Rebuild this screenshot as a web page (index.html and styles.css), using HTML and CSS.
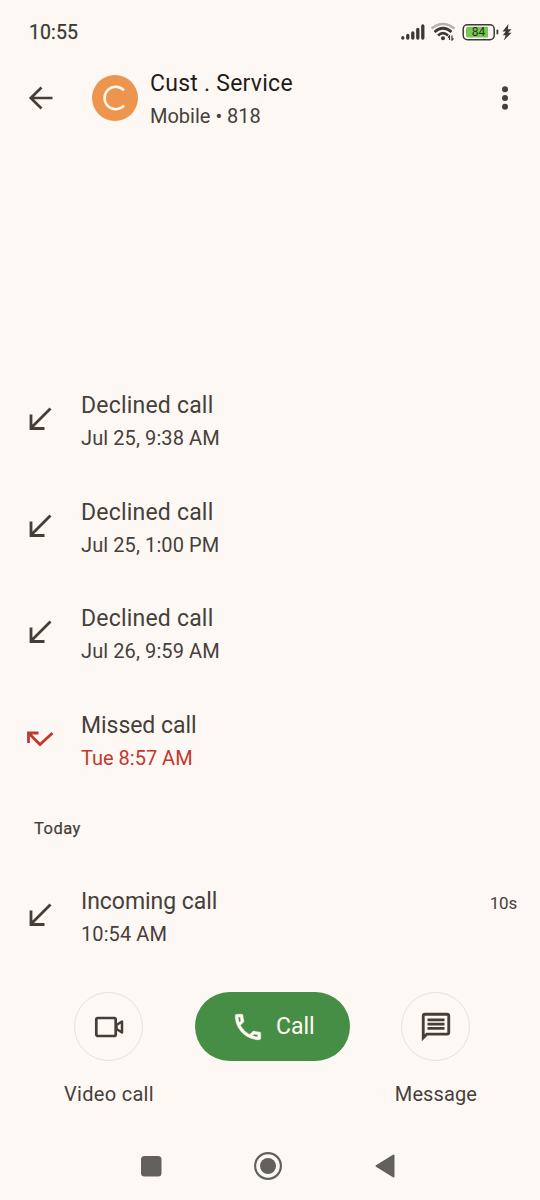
FILE: index.html
```html
<!DOCTYPE html>
<html lang="en">
<head>
<meta charset="utf-8">
<title>Call history</title>
<link rel="stylesheet" href="styles.css">
</head>
<body>
<div class="status">
  <span class="clock">10:55</span>
  <svg class="status-icons" width="112" height="20" viewBox="0 0 112 20">
    <g stroke="#3b3835" stroke-width="3.300" stroke-linecap="round">
      <path d="M2.800 17v-.3M7.800 17v-2.500M12.800 17v-5M17.800 17V8.500M22.800 17V5"/>
    </g>
    <g fill="none" stroke-width="2.700">
      <path d="M31.500 7.500Q43-1.500 54.500 7.500" stroke="#b5b1ad" stroke-width="2.300"/>
      <path d="M34.500 11Q43 3.500 51.500 11" stroke="#3b3835"/>
      <path d="M38 14.400Q43 10 48 14.400" stroke="#3b3835"/>
    </g>
    <circle cx="43" cy="17.300" r="2" fill="#3b3835"/>
    <path d="M49.500 19v-4l-1.500 1.500M52 14.500v4.500l1.500-1.500" fill="none" stroke="#3b3835" stroke-width="1.200"/>
    <rect x="63.200" y="3.700" width="31" height="15" rx="4.200" fill="none" stroke="#3b3835" stroke-width="1.500"/>
    <path d="M68 5.800h20v10.700H68a2 2 0 0 1-2-2V7.800a2 2 0 0 1 2-2z" fill="#79c657"/>
    <rect x="96.500" y="8.500" width="1.800" height="5" rx=".9" fill="#3b3835"/>
    <text class="battery-level" x="78.500" y="15.400" text-anchor="middle">84</text>
    <path d="M108.500 3L102.500 10.500h3.300L102.800 14.300h2.900L103.800 19.500l7.800-7.800h-3.400l3.300-3.500h-3.700z" fill="#3b3835"/>
  </svg>
</div>

<header class="topbar">
  <svg class="back" width="26" height="26" viewBox="0 0 26 26"><path d="M24.500 13H3M13.500 2.500L2.800 13 13.500 23.500" fill="none" stroke="#463d36" stroke-width="2.700"/></svg>
  <div class="avatar"><svg width="24" height="26" viewBox="0 0 22 24"><path d="M19.300 5.100A10.300 10.300 0 1 0 19.300 18.900" fill="none" stroke="#fff8ee" stroke-width="2.300"/></svg></div>
  <div class="contact">
    <div class="name">Cust . Service</div>
    <div class="number">Mobile • 818</div>
  </div>
  <svg class="more" width="8" height="26" viewBox="0 0 8 26" fill="#463f3a"><circle cx="4" cy="4.300" r="3"/><circle cx="4" cy="13" r="3"/><circle cx="4" cy="21.700" r="3"/></svg>
</header>

<main class="history">
  <div class="entry">
    <svg class="dir" viewBox="0 0 28 28"><path d="M23.500 3.500L4 23M4 9.500V23.500H17.500"/></svg>
    <div><div class="kind">Declined call</div><div class="time">Jul 25, 9:38 AM</div></div>
  </div>
  <div class="entry">
    <svg class="dir" viewBox="0 0 28 28"><path d="M23.500 3.500L4 23M4 9.500V23.500H17.500"/></svg>
    <div><div class="kind">Declined call</div><div class="time">Jul 25, 1:00 PM</div></div>
  </div>
  <div class="entry">
    <svg class="dir" viewBox="0 0 28 28"><path d="M23.500 3.500L4 23M4 9.500V23.500H17.500"/></svg>
    <div><div class="kind">Declined call</div><div class="time">Jul 26, 9:59 AM</div></div>
  </div>
  <div class="entry missed">
    <svg class="dir" viewBox="0 0 28 28"><path d="M11.500 8H1.500V18M1.500 8L13 19.500 25.500 8"/></svg>
    <div><div class="kind">Missed call</div><div class="time">Tue 8:57 AM</div></div>
  </div>
  <h2 class="day">Today</h2>
  <div class="entry incoming">
    <svg class="dir" viewBox="0 0 28 28"><path d="M23.500 3.500L4 23M4 9.500V23.500H17.500"/></svg>
    <div><div class="kind">Incoming call</div><div class="time">10:54 AM</div></div>
    <span class="duration">10s</span>
  </div>
</main>

<div class="actions">
  <div class="action">
    <div class="round"><svg width="32" height="32" viewBox="0 0 32 32" fill="none" stroke="#463d36" stroke-width="2.700" stroke-linejoin="round"><rect x="3.300" y="7" width="19.400" height="18" rx="1.500"/><path d="M23.500 14l5.500-3.500v11L23.500 18z" stroke-width="2.500"/></svg></div>
    <span class="label video">Video call</span>
  </div>
  <div class="call">
    <svg width="34" height="34" viewBox="0 0 24 24" fill="#fffdf0" stroke="#fffdf0" stroke-width=".3"><path d="M6.540 5c.06.890.210 1.760.450 2.590l-1.200 1.200c-.410-1.200-.670-2.470-.760-3.790h1.510m9.860 12.020c.850.240 1.720.390 2.600.450v1.490c-1.320-.090-2.590-.350-3.800-.750l1.200-1.190M7.500 3H4c-.550 0-1 .450-1 1 0 9.390 7.610 17 17 17 .550 0 1-.450 1-1v-3.490c0-.550-.450-1-1-1-1.240 0-2.450-.200-3.570-.570a.84.84 0 0 0-.310-.050c-.260 0-.510.100-.710.290l-2.200 2.200a15.150 15.150 0 0 1-6.590-6.590l2.200-2.200c.280-.280.360-.670.250-1.020A11.360 11.360 0 0 1 8.500 4c0-.550-.450-1-1-1z"/></svg>
    <span>Call</span>
  </div>
  <div class="action">
    <div class="round"><svg width="34" height="34" viewBox="0 0 24 24" fill="#463d36"><path d="M4 4h16v12H5.170L4 17.170V4m0-2c-1.100 0-1.990.9-1.990 2L2 22l4-4h14c1.100 0 2-.9 2-2V4c0-1.100-.9-2-2-2H4zm2 10h12v2H6v-2zm0-3h12v2H6V9zm0-3h12v2H6V6z"/></svg></div>
    <span class="label">Message</span>
  </div>
</div>

<nav class="navbar">
  <svg width="22" height="22" viewBox="0 0 22 22"><rect x="1" y="1" width="20.500" height="20.500" rx="3.500" fill="#62605d"/></svg>
  <svg width="30" height="30" viewBox="0 0 30 30"><circle cx="15" cy="15" r="12.900" fill="none" stroke="#62605d" stroke-width="2.200"/><circle cx="15" cy="15" r="8" fill="#62605d"/></svg>
  <svg width="22" height="26" viewBox="0 0 22 26"><path d="M2.500 13L19.500 2.500v21z" fill="#62605d" stroke="#62605d" stroke-width="2" stroke-linejoin="round"/></svg>
</nav>
</body>
</html>
```
FILE: styles.css
```css
* { box-sizing: border-box; }
body {
  margin: 0;
  height: 1200px;
  display: flex;
  flex-direction: column;
  overflow: hidden;
  background: #fef8f4;
  color: #463f3a;
  font-family: Roboto, "Liberation Sans", sans-serif;
}
svg { display: block; flex: none; }
.status {
  height: 64px;
  padding: 0 28px 0 29px;
  display: flex;
  align-items: center;
  justify-content: space-between;
}
.clock { font-size: 19.5px; color: #3b3835; letter-spacing: .1px; -webkit-text-stroke: .25px; }
.status-icons { margin-top: -2px; }
.battery-level { font-size: 12px; fill: #203a17; }
.topbar {
  height: 68px;
  padding: 0 31px 0 28px;
  display: flex;
  align-items: center;
}
.avatar {
  width: 46px;
  height: 46px;
  margin-left: 38px;
  border-radius: 50%;
  background: #ed954f;
  display: flex;
  align-items: center;
  justify-content: center;
}
.contact { flex: 1; margin-left: 12px; padding-top: 3px; line-height: 33px; }
.name { font-size: 23px; color: #211c18; letter-spacing: .25px; }
.number { font-size: 20px; line-height: 32px; }
.history { height: 833px; padding-top: 257px; }
.entry {
  height: 66px;
  margin-bottom: 40.7px;
  padding: 0 23px 0 27px;
  display: flex;
  align-items: center;
  line-height: 33px;
}
.dir {
  width: 28px;
  height: 28px;
  margin: -6px 26px 0 0;
  fill: none;
  stroke: #463d36;
  stroke-width: 2.8;
}
.kind { font-size: 23px; letter-spacing: .2px; }
.time { font-size: 20px; letter-spacing: .1px; }
.missed { margin-bottom: 0; }
.missed .kind, .incoming .kind { letter-spacing: -.05px; }
.missed .time { letter-spacing: 0; }
.missed .dir { stroke: #c2372e; }
.missed .time { color: #c2372e; }
.day {
  margin: 0;
  height: 110px;
  padding: 38px 0 0 34px;
  font-size: 16.5px;
  line-height: 32px;
  font-weight: 400;
  letter-spacing: .5px;
  -webkit-text-stroke: .25px;
}
.incoming { margin-bottom: 0; }
.duration { margin-left: auto; margin-top: -30px; font-size: 17px; letter-spacing: -.2px; }
.actions {
  height: 168px;
  padding: 27px 63px 0 64px;
  display: flex;
  justify-content: space-between;
  align-items: flex-start;
}
.action { display: flex; flex-direction: column; align-items: center; }
.round {
  width: 69px;
  height: 69px;
  border: 1px solid #ecdfd7;
  border-radius: 50%;
  display: flex;
  align-items: center;
  justify-content: center;
}
.label { margin-top: 17px; font-size: 20px; line-height: 32px; white-space: nowrap; letter-spacing: .1px; }
.video { letter-spacing: .3px; }
.call {
  width: 155px;
  height: 69px;
  margin-right: 3px;
  border-radius: 35px;
  background: #468d46;
  color: #fffdf0;
  display: flex;
  align-items: center;
  justify-content: center;
  gap: 11px;
  font-size: 23px;
}
.navbar {
  height: 67px;
  padding: 0 144px 2px 140px;
  display: flex;
  align-items: center;
  justify-content: space-between;
}
```
